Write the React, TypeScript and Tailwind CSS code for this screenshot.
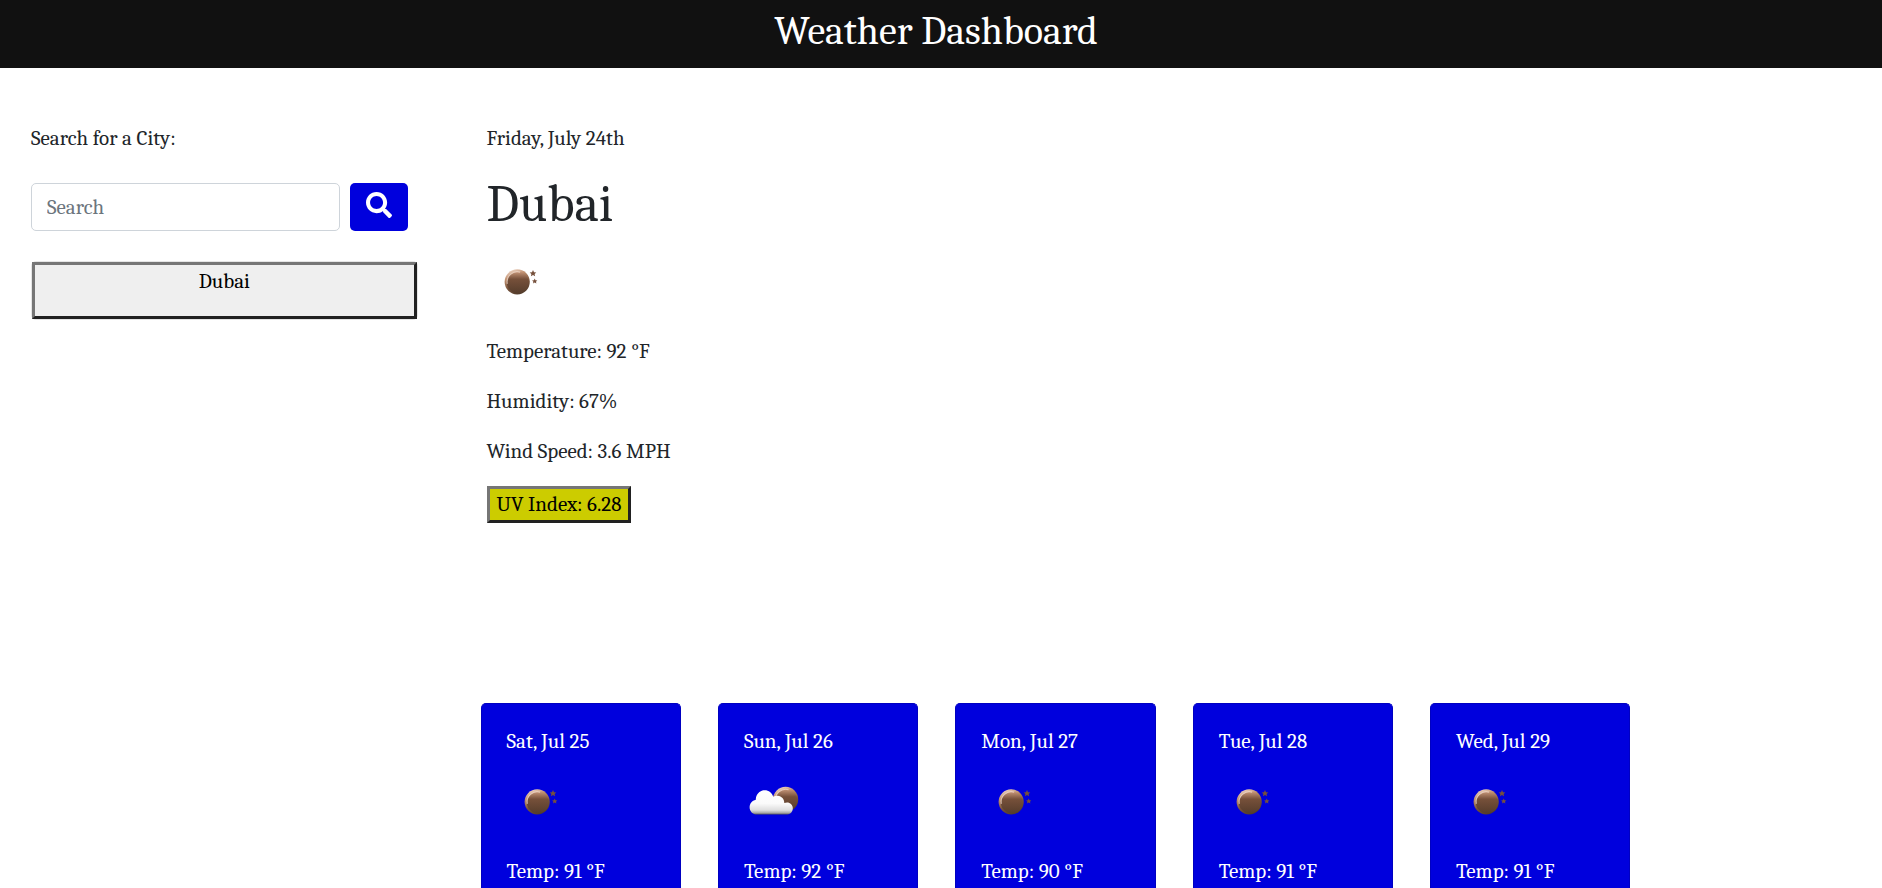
import React from "react";
import { FaSearch } from "react-icons/fa";

type Sky = "clear" | "clouds";

const forecast: { day: string; sky: Sky; temp: number }[] = [
  { day: "Sat, Jul 25", sky: "clear", temp: 91 },
  { day: "Sun, Jul 26", sky: "clouds", temp: 92 },
  { day: "Mon, Jul 27", sky: "clear", temp: 90 },
  { day: "Tue, Jul 28", sky: "clear", temp: 91 },
  { day: "Wed, Jul 29", sky: "clear", temp: 91 },
];

const STAR = "M0 -3.3 L1 -1.1 L3.3 -0.9 L1.6 0.7 L2.1 3 L0 1.8 L-2.1 3 L-1.6 0.7 L-3.3 -0.9 L-1 -1.1 Z";

function Moon({ id, cx, cy }: { id: string; cx: number; cy: number }) {
  return (
    <g transform={`translate(${cx} ${cy})`}>
      <defs>
        <linearGradient id={`${id}-rim`} x1="0.2" y1="0" x2="0.6" y2="1">
          <stop offset="0" stopColor="#f3ddcf" />
          <stop offset="0.3" stopColor="#c0906f" />
          <stop offset="0.65" stopColor="#76523a" />
          <stop offset="1" stopColor="#503a2a" />
        </linearGradient>
        <linearGradient id={`${id}-face`} x1="0" y1="0" x2="0" y2="1">
          <stop offset="0" stopColor="#c8977a" />
          <stop offset="0.35" stopColor="#76503a" />
          <stop offset="1" stopColor="#563d2c" />
        </linearGradient>
      </defs>
      <circle r="12.6" fill={`url(#${id}-rim)`} />
      <circle cx="0.6" cy="0.6" r="10.9" fill={`url(#${id}-face)`} />
      <path d="M-9.9 2 A 10.2 10.2 0 0 1 3 -9.7" fill="none" stroke="#f1dccd" strokeOpacity="0.75" strokeWidth="1.1" />
    </g>
  );
}

function WeatherIcon({ id, sky }: { id: string; sky: Sky }) {
  if (sky === "clear") {
    return (
      <svg viewBox="0 0 60 60" className="block size-[60px]" role="img" aria-label="Clear sky">
        <Moon id={id} cx={30.2} cy={29.8} />
        <path d={STAR} transform="translate(46 21.3)" fill="#76503c" />
        <path d={STAR} transform="translate(47.7 29.1) scale(0.8)" fill="#76503c" />
      </svg>
    );
  }
  return (
    <svg viewBox="0 0 60 60" className="block size-[60px]" role="img" aria-label="Few clouds">
      <defs>
        <linearGradient id={`${id}-cloud`} gradientUnits="userSpaceOnUse" x1="0" y1="18" x2="0" y2="42.6">
          <stop offset="0" stopColor="#ffffff" />
          <stop offset="0.55" stopColor="#fafafa" />
          <stop offset="0.82" stopColor="#dedede" />
          <stop offset="0.93" stopColor="#a8a8a8" />
          <stop offset="1" stopColor="#555555" />
        </linearGradient>
      </defs>
      <Moon id={id} cx={41.6} cy={27.4} />
      <path
        d="M13 42.5 C8.6 42.5 5.6 39.3 5.6 35.2 C5.6 31.5 8 28.6 11.8 27.7 C11.9 22.3 15.8 18.3 20.7 18.3 C24.8 18.3 28 20.8 29.2 24.7 C30.6 23.9 32.2 23.5 33.8 23.7 C37.7 24.1 40.4 27 40.3 31.1 C44.8 29.3 48.8 32.2 48.8 36.2 C48.8 39.8 46.4 42.5 42.6 42.5 Z"
        fill={`url(#${id}-cloud)`}
      />
    </svg>
  );
}

export default function App() {
  return (
    <div className="flex min-h-screen flex-col bg-white font-[Cambria,Caladea,'Liberation_Serif',serif] text-[21px] leading-[30px] text-[#212529]">
      <header className="bg-[#111111] pt-[7px] pr-2.5 pb-[13px] text-center">
        <h1 className="text-[40px] leading-[48px] font-medium text-white">Weather Dashboard</h1>
      </header>

      <div className="flex flex-1 pt-[55px]">
        <aside className="w-1/4 pr-[53px] pl-[31px]">
          <label htmlFor="city">Search for a City:</label>
          <form className="mt-[30px] flex gap-2.5 pr-2.5" onSubmit={(e) => e.preventDefault()}>
            <input
              id="city"
              type="search"
              placeholder="Search"
              className="h-12 min-w-0 flex-1 rounded-[5px] border border-[#ced4da] bg-white px-[15px] placeholder:text-[#6c757d]"
            />
            <button
              type="submit"
              aria-label="Search"
              className="flex h-12 w-[58px] justify-center rounded-[5px] bg-[#0000dd] pt-[9px] text-white"
            >
              <FaSearch className="size-[26px]" />
            </button>
          </form>
          <div className="mt-[30px] rounded-[5px] border border-black/10">
            <button
              type="button"
              className="block w-full border-3 border-t-[#767676] border-r-[#212121] border-b-[#212121] border-l-[#767676] bg-[#efefef] pt-px pb-5 text-black"
            >
              Dubai
            </button>
          </div>
        </aside>

        <main className="flex flex-1 flex-col pl-2.5">
          <section className="flex flex-col items-start px-1.5">
            <p>Friday, July 24th</p>
            <h2 className="mt-[21px] text-[52px] leading-[60px]">Dubai</h2>
            <div className="mt-[18px]">
              <WeatherIcon id="today" sky="clear" />
            </div>
            <div className="mt-6 flex flex-col gap-5">
              <p>Temperature: 92 °F</p>
              <p>Humidity: 67%</p>
              <p>Wind Speed: 3.6 MPH</p>
            </div>
            <button
              type="button"
              className="mt-5 border-3 border-t-[#767676] border-r-[#212121] border-b-[#212121] border-l-[#767676] bg-[#cccc00] px-[7px] leading-[31px] text-black"
            >
              UV Index: 6.28
            </button>
          </section>

          <section className="mt-[180px] grid max-w-[1150px] flex-1 grid-cols-5 gap-[37px]">
            {forecast.map((f, i) => (
              <article
                key={f.day}
                className="rounded-t-[5px] border border-b-0 border-[#0000c1] bg-[#0000dd] px-[25px] pt-[22px] font-medium text-white"
              >
                <h3>{f.day}</h3>
                <div className="mt-4">
                  <WeatherIcon id={`day-${i}`} sky={f.sky} />
                </div>
                <p className="mt-6">Temp: {f.temp} °F</p>
              </article>
            ))}
          </section>
        </main>
      </div>
    </div>
  );
}
